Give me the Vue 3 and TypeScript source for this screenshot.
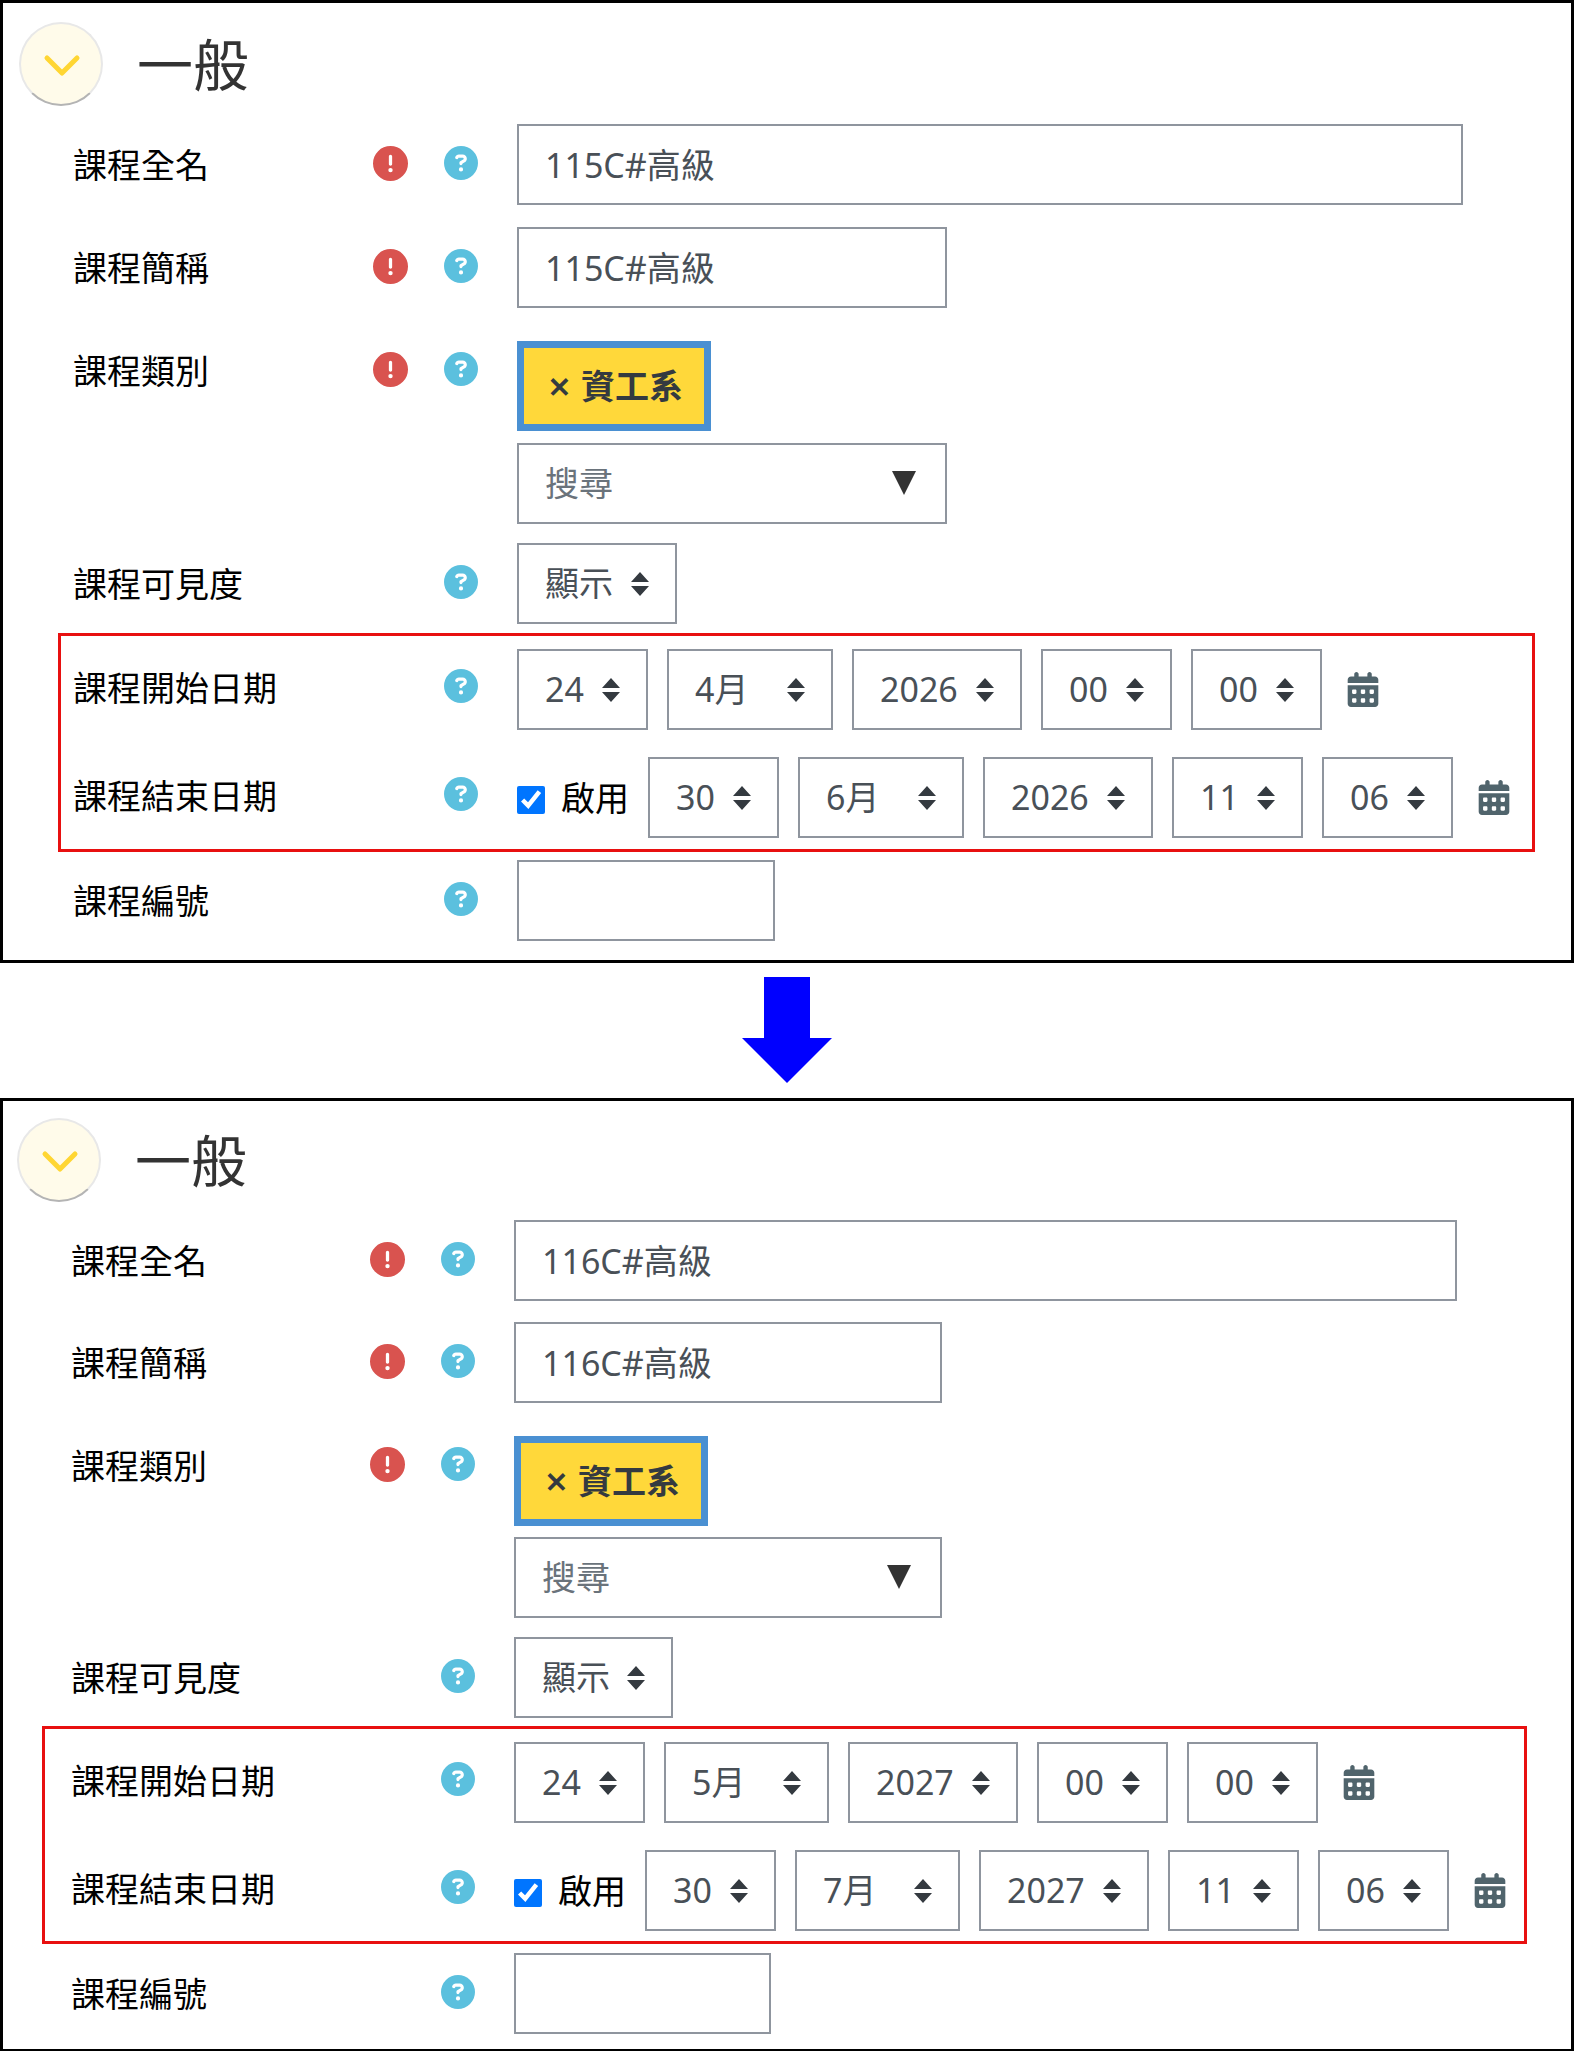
<script setup lang="ts">
import { reactive } from 'vue'

interface DateValue {
  day: string
  month: string
  year: string
  hour: string
  minute: string
}

interface CourseForm {
  id: string
  fullName: string
  shortName: string
  category: string
  search: string
  visibility: string
  start: DateValue
  end: DateValue
  endEnabled: boolean
  idNumber: string
}

const forms = reactive<CourseForm[]>([
  {
    id: 'before',
    fullName: '115C#高級',
    shortName: '115C#高級',
    category: '資工系',
    search: '',
    visibility: '顯示',
    start: { day: '24', month: '4月', year: '2026', hour: '00', minute: '00' },
    end: { day: '30', month: '6月', year: '2026', hour: '11', minute: '06' },
    endEnabled: true,
    idNumber: '',
  },
  {
    id: 'after',
    fullName: '116C#高級',
    shortName: '116C#高級',
    category: '資工系',
    search: '',
    visibility: '顯示',
    start: { day: '24', month: '5月', year: '2027', hour: '00', minute: '00' },
    end: { day: '30', month: '7月', year: '2027', hour: '11', minute: '06' },
    endEnabled: true,
    idNumber: '',
  },
])

const pad = (n: number): string => String(n).padStart(2, '0')
const range = (from: number, to: number): number[] =>
  Array.from({ length: to - from + 1 }, (_, i) => from + i)

const parts: { key: keyof DateValue; name: string; options: string[] }[] = [
  { key: 'day', name: '日', options: range(1, 31).map(String) },
  { key: 'month', name: '月', options: range(1, 12).map((m) => `${m}月`) },
  { key: 'year', name: '年', options: range(2020, 2032).map(String) },
  { key: 'hour', name: '時', options: range(0, 23).map(pad) },
  { key: 'minute', name: '分', options: range(0, 59).map(pad) },
]

const dateRows: { key: 'start' | 'end'; label: string }[] = [
  { key: 'start', label: '課程開始日期' },
  { key: 'end', label: '課程結束日期' },
]

const requiredIcon =
  'M256 512A256 256 0 1 0 256 0a256 256 0 1 0 0 512zm0-384c13.3 0 24 10.7 24 24V264c0 13.3-10.7 24-24 24s-24-10.7-24-24V152c0-13.3 10.7-24 24-24zM224 352a32 32 0 1 1 64 0 32 32 0 1 1 -64 0z'
const helpIcon =
  'M256 512A256 256 0 1 0 256 0a256 256 0 1 0 0 512zM169.8 165.3c7.9-22.3 29.1-37.3 52.8-37.3h58.3c34.9 0 63.1 28.3 63.1 63.1c0 22.6-12.1 43.5-31.7 54.8L280 264.4c-.2 13-10.9 23.6-24 23.6c-13.3 0-24-10.7-24-24V250.5c0-8.6 4.6-16.5 12.1-20.8l44.3-25.4c4.7-2.7 7.6-7.7 7.6-13.1c0-8.4-6.8-15.1-15.1-15.1H222.6c-3.4 0-6.4 2.1-7.5 5.3l-.4 1.2c-4.4 12.5-18.2 19-30.6 14.6s-19-18.2-14.6-30.6l.4-1.2zM224 352a32 32 0 1 1 64 0 32 32 0 1 1 -64 0z'
const calendarIcon =
  'M128 0c17.7 0 32 14.3 32 32V64H288V32c0-17.7 14.3-32 32-32s32 14.3 32 32V64h48c26.5 0 48 21.5 48 48v48H0V112C0 85.5 21.5 64 48 64H96V32c0-17.7 14.3-32 32-32zM0 192H448V464c0 26.5-21.5 48-48 48H48c-26.5 0-48-21.5-48-48V192zm64 80v32c0 8.8 7.2 16 16 16h32c8.8 0 16-7.2 16-16V272c0-8.8-7.2-16-16-16H80c-8.8 0-16 7.2-16 16zm128 0v32c0 8.8 7.2 16 16 16h32c8.8 0 16-7.2 16-16V272c0-8.8-7.2-16-16-16H208c-8.8 0-16 7.2-16 16zm144-16c-8.8 0-16 7.2-16 16v32c0 8.8 7.2 16 16 16h32c8.8 0 16-7.2 16-16V272c0-8.8-7.2-16-16-16H336zM64 400v32c0 8.8 7.2 16 16 16h32c8.8 0 16-7.2 16-16V400c0-8.8-7.2-16-16-16H80c-8.8 0-16 7.2-16 16zm144-16c-8.8 0-16 7.2-16 16v32c0 8.8 7.2 16 16 16h32c8.8 0 16-7.2 16-16V400c0-8.8-7.2-16-16-16H208zm112 16v32c0 8.8 7.2 16 16 16h32c8.8 0 16-7.2 16-16V400c0-8.8-7.2-16-16-16H336c-8.8 0-16 7.2-16 16z'
</script>

<template>
  <main class="page">
    <template v-for="(form, index) in forms" :key="form.id">
      <div v-if="index > 0" class="arrow">
        <svg width="90" height="106" viewBox="0 0 90 106" aria-hidden="true">
          <path d="M22 0h46v61h22L45 106 0 61h22z" fill="#0000ff" />
        </svg>
      </div>

      <section class="panel" :class="form.id">
        <header class="heading">
          <button class="toggle" type="button" aria-label="收合一般" aria-expanded="true">
            <svg width="38" height="25" viewBox="0 0 38 25" aria-hidden="true">
              <path d="M4 4L19 19 34 4" fill="none" stroke="#ffd633" stroke-width="5" stroke-linecap="round" stroke-linejoin="round" />
            </svg>
          </button>
          <h2>一般</h2>
        </header>

        <form class="body" @submit.prevent>
          <div class="row">
            <div class="caption">
              <label :for="`${form.id}-full`">課程全名</label>
              <svg class="required" viewBox="0 0 512 512" role="img" aria-label="必填"><path :d="requiredIcon" /></svg>
              <button class="help" type="button" aria-label="課程全名說明"><svg viewBox="0 0 512 512"><path :d="helpIcon" /></svg></button>
            </div>
            <input :id="`${form.id}-full`" v-model="form.fullName" class="control full" type="text" />
          </div>

          <div class="row">
            <div class="caption">
              <label :for="`${form.id}-short`">課程簡稱</label>
              <svg class="required" viewBox="0 0 512 512" role="img" aria-label="必填"><path :d="requiredIcon" /></svg>
              <button class="help" type="button" aria-label="課程簡稱說明"><svg viewBox="0 0 512 512"><path :d="helpIcon" /></svg></button>
            </div>
            <input :id="`${form.id}-short`" v-model="form.shortName" class="control half" type="text" />
          </div>

          <div class="row category">
            <div class="caption">
              <label :for="`${form.id}-category`">課程類別</label>
              <svg class="required" viewBox="0 0 512 512" role="img" aria-label="必填"><path :d="requiredIcon" /></svg>
              <button class="help" type="button" aria-label="課程類別說明"><svg viewBox="0 0 512 512"><path :d="helpIcon" /></svg></button>
            </div>
            <div class="picker">
              <button class="tag" type="button"><span class="remove">×</span><span>{{ form.category }}</span></button>
              <div class="combo">
                <input :id="`${form.id}-category`" v-model="form.search" class="control half" type="text" placeholder="搜尋" />
                <button class="combo-open" type="button" aria-label="開啟清單">
                  <svg width="24" height="24" viewBox="0 0 24 24"><path d="M0 0h24L12 24z" fill="#333" /></svg>
                </button>
              </div>
            </div>
          </div>

          <div class="row visibility">
            <div class="caption">
              <label :for="`${form.id}-visible`">課程可見度</label>
              <button class="help" type="button" aria-label="課程可見度說明"><svg viewBox="0 0 512 512"><path :d="helpIcon" /></svg></button>
            </div>
            <span class="pick show">
              <select :id="`${form.id}-visible`" v-model="form.visibility" class="control">
                <option>顯示</option>
                <option>隱藏</option>
              </select>
              <svg viewBox="0 0 18 24"><path d="M9 0L0 10h18zM9 24L0 14h18z" /></svg>
            </span>
          </div>

          <div class="highlight">
            <div v-for="row in dateRows" :key="row.key" class="row date">
              <div class="caption">
                <label :for="`${form.id}-${row.key}-day`">{{ row.label }}</label>
                <button class="help" type="button" :aria-label="`${row.label}說明`"><svg viewBox="0 0 512 512"><path :d="helpIcon" /></svg></button>
              </div>
              <div class="selectors">
                <label v-if="row.key === 'end'" class="enable">
                  <input v-model="form.endEnabled" type="checkbox" />
                  <span>啟用</span>
                </label>
                <span v-for="part in parts" :key="part.key" class="pick" :class="part.key">
                  <select :id="`${form.id}-${row.key}-${part.key}`" v-model="form[row.key][part.key]" class="control" :aria-label="`${row.label} ${part.name}`">
                    <option v-for="option in part.options" :key="option">{{ option }}</option>
                  </select>
                  <svg viewBox="0 0 18 24"><path d="M9 0L0 10h18zM9 24L0 14h18z" /></svg>
                </span>
                <button class="calendar" type="button" aria-label="行事曆">
                  <svg viewBox="0 0 448 512"><path :d="calendarIcon" /></svg>
                </button>
              </div>
            </div>
          </div>

          <div class="row">
            <div class="caption">
              <label :for="`${form.id}-number`">課程編號</label>
              <button class="help" type="button" aria-label="課程編號說明"><svg viewBox="0 0 512 512"><path :d="helpIcon" /></svg></button>
            </div>
            <input :id="`${form.id}-number`" v-model="form.idNumber" class="control number" type="text" />
          </div>
        </form>
      </section>
    </template>
  </main>
</template>

<style>
body {
  margin: 0;
  background: #fff;
}
</style>

<style scoped>
.page {
  font-family: 'Noto Sans', 'Noto Sans CJK TC', sans-serif;
  font-size: 34px;
  line-height: 48px;
  color: #000;
}

.page * {
  box-sizing: border-box;
}

button,
input,
select {
  margin: 0;
  font: inherit;
}

button {
  padding: 0;
  border: 0;
  background: none;
  cursor: pointer;
}

svg {
  display: block;
}

.panel {
  --edge: 70px;
  --caption: 444px;
  --right: 36px;
  --full-gap: 72px;
  --small: 131px;
  --month: 166px;
  --show: 160px;
  --half: 430px;
  --number: 258px;
  --box: 15px;
  --row-gap: 22px;
  border: 3px solid #000;
  padding: 19px 0;
}

.panel.after {
  --edge: 68px;
  --caption: 443px;
  --right: 44px;
  --full-gap: 70px;
  --small: 131px;
  --month: 165px;
  --show: 159px;
  --half: 428px;
  --number: 257px;
  --box: 29px;
  --row-gap: 21px;
  padding: 17px 0 15px;
}

.heading {
  display: flex;
  align-items: center;
  gap: 34px;
  padding-left: calc(var(--edge) - 54px);
  margin-bottom: 18px;
}

.toggle {
  display: flex;
  align-items: center;
  justify-content: center;
  width: 84px;
  height: 84px;
  padding: 5px 0 0 2px;
  border: 2px solid #e8e8e8;
  border-bottom-color: #b4b4b4;
  border-radius: 50%;
  background: #fffbea;
}

h2 {
  margin: 0;
  font-size: 56px;
  font-weight: 400;
  line-height: 84px;
  color: #333;
}

.body {
  padding: 0 var(--right) 0 var(--edge);
}

.row {
  display: grid;
  grid-template-columns: var(--caption) minmax(0, 1fr);
  align-items: start;
  margin-bottom: var(--row-gap);
}

.row:last-child {
  margin-bottom: 0;
}

.caption {
  display: flex;
  align-items: center;
  height: 81px;
  padding-right: 39px;
}

.caption label {
  flex: 1;
}

.category {
  margin: 33px 0 19px;
}

.category .caption {
  height: 60px;
}

.visibility {
  margin-bottom: 9px;
}

.after .visibility {
  margin-bottom: 8px;
}

.required {
  width: 35px;
  height: 35px;
  margin: 0 36px 3px 0;
  fill: #d9534f;
}

.help {
  width: 34px;
  height: 34px;
  margin-bottom: 4px;
}

.help svg {
  width: 34px;
  height: 34px;
  fill: #5bc0de;
}

.control {
  display: block;
  height: 81px;
  padding: 0 26px 2px;
  border: 2px solid #8f959e;
  border-radius: 0;
  background: #fff;
  color: #495057;
  appearance: none;
}

.control::placeholder {
  color: #6a737b;
  opacity: 1;
}

.full {
  width: calc(100% - var(--full-gap));
}

.half {
  width: var(--half);
}

.number {
  width: var(--number);
}

.picker {
  display: flex;
  flex-direction: column;
  align-items: flex-start;
  gap: 12px;
}

.after .picker {
  gap: 11px;
}

.tag {
  display: flex;
  align-items: center;
  gap: 10px;
  height: 90px;
  padding: 0 21px 0 24px;
  border: 7px solid #4a90d2;
  background: #ffd83a;
  font-weight: 700;
  color: #343a40;
}

.remove {
  font-size: 40px;
  font-weight: 600;
}

.combo,
.pick {
  position: relative;
}

.combo-open {
  position: absolute;
  top: 28px;
  right: 31px;
}

.pick {
  flex: none;
  width: var(--small);
}

.pick .control {
  width: 100%;
  padding-right: 0;
}

.pick svg {
  position: absolute;
  top: 29px;
  right: 28px;
  width: 18px;
  height: 24px;
  fill: #343a40;
  pointer-events: none;
}

.pick.month {
  width: var(--month);
}

.pick.year {
  width: 170px;
}

.pick.show {
  width: var(--show);
}

.highlight {
  margin: 0 0 8px calc(0px - var(--box));
  padding: 13px 0 11px calc(var(--box) - 3px);
  border: 3px solid #e81010;
}

.after .highlight {
  margin-bottom: 9px;
  padding-bottom: 10px;
}

.date {
  margin-bottom: 27px;
}

.date .caption {
  height: 77px;
}

.selectors {
  display: flex;
  align-items: center;
  gap: 19px;
}

.enable {
  display: flex;
  align-items: center;
  gap: 16px;
}

.enable input {
  width: 28px;
  height: 28px;
  margin-top: 4px;
}

.calendar {
  margin-left: 6px;
}

.calendar svg {
  width: 32px;
  height: 35px;
  fill: #50646c;
}

.arrow {
  display: flex;
  justify-content: center;
  padding: 14px 0 15px;
}
</style>
